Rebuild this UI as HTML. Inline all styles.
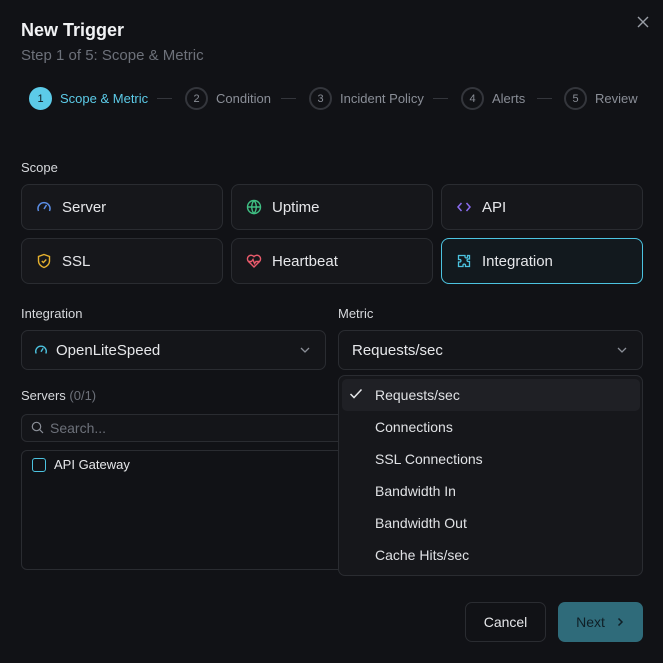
<!DOCTYPE html>
<html><head><style>
*{box-sizing:border-box;margin:0;padding:0}
body{width:663px;height:663px;background:#111216;font-family:"Liberation Sans",sans-serif;color:#e6e7ea;position:relative;overflow:hidden}
.a{position:absolute}
.card{position:absolute;width:202px;height:46px;border:1px solid #2a2c31;border-radius:8px;background:#16171b;font-size:15px;display:flex;align-items:center;padding-left:14px}
.card svg{margin-right:10px}
.lbl{position:absolute;font-size:13px;color:#d6d8dc}
.step{position:absolute;top:87px;display:flex;align-items:center;font-size:13px;color:#8a8e97}
.c{width:23px;height:23px;border-radius:50%;border:2px solid #34363c;display:flex;align-items:center;justify-content:center;font-size:11px;margin-right:8px;color:#8a8e97}
.dash{position:absolute;top:98px;height:1px;background:#34363c;width:15px}
.sel{position:absolute;height:40px;border:1px solid #2a2c31;border-radius:7px;background:#141519;font-size:15px;display:flex;align-items:center}
.it{position:absolute;left:375px;font-size:14px;color:#e0e2e5}
</style></head><body>
<div class="a" style="left:21px;top:20px;font-size:18px;font-weight:bold;color:#f1f2f4">New Trigger</div>
<div class="a" style="left:21px;top:47px;font-size:15px;color:#6d717a">Step 1 of 5: Scope &amp; Metric</div>
<svg class="a" style="left:637px;top:16px" width="12" height="12" viewBox="0 0 12 12"><path d="M1 1L11 11M11 1L1 11" stroke="#9a9ea6" stroke-width="1.4"/></svg>

<div class="step" style="left:29px;color:#5ccbe8"><div class="c" style="background:#5ccbe8;border-color:#5ccbe8;color:#0e1a20">1</div>Scope &amp; Metric</div>
<div class="dash" style="left:157px"></div>
<div class="step" style="left:185px"><div class="c">2</div>Condition</div>
<div class="dash" style="left:281px"></div>
<div class="step" style="left:309px"><div class="c">3</div>Incident Policy</div>
<div class="dash" style="left:433px"></div>
<div class="step" style="left:461px"><div class="c">4</div>Alerts</div>
<div class="dash" style="left:537px"></div>
<div class="step" style="left:564px"><div class="c">5</div>Review</div>

<div class="lbl" style="left:21px;top:160px">Scope</div>
<div class="card" style="left:21px;top:184px"><svg width="16" height="16" viewBox="0 0 16 16" fill="none" stroke="#5b8ee6" stroke-width="1.5"><path d="M2.5 12A6 6 0 1 1 13.5 12"/><path d="M8 10L10.5 6"/></svg>Server</div>
<div class="card" style="left:231px;top:184px"><svg width="16" height="16" viewBox="0 0 16 16" fill="none" stroke="#3fbf83" stroke-width="1.4"><circle cx="8" cy="8" r="6.5"/><path d="M1.5 8H14.5M8 1.5C5 5 5 11 8 14.5C11 11 11 5 8 1.5"/></svg>Uptime</div>
<div class="card" style="left:441px;top:184px"><svg width="16" height="16" viewBox="0 0 16 16" fill="none" stroke="#8b6cf0" stroke-width="1.5"><path d="M5.5 4L2 8L5.5 12M10.5 4L14 8L10.5 12"/></svg>API</div>
<div class="card" style="left:21px;top:238px"><svg width="16" height="16" viewBox="0 0 16 16" fill="none" stroke="#e6b12e" stroke-width="1.4"><path d="M8 1.5L13.5 3.5V8C13.5 11 11 13.5 8 14.5C5 13.5 2.5 11 2.5 8V3.5Z"/><path d="M5.8 8L7.4 9.5L10.3 6.5"/></svg>SSL</div>
<div class="card" style="left:231px;top:238px"><svg width="16" height="16" viewBox="0 0 16 16" fill="none" stroke="#e85a6b" stroke-width="1.4"><path d="M8 14L2.3 8.3A3.5 3.5 0 0 1 8 3.6A3.5 3.5 0 0 1 13.7 8.3Z"/><path d="M2 8.5H5.5L7 6.5L8.5 10.5L10 8.5H14"/></svg>Heartbeat</div>
<div class="card" style="left:441px;top:238px;border-color:#4cc3e0;background:#12191e"><svg width="16" height="16" viewBox="0 0 16 16" fill="none" stroke="#4cc3e0" stroke-width="1.3"><path d="M6 2.5H9V4A1.3 1.3 0 0 0 11.5 4V2.5H13.5V6H12A1.3 1.3 0 0 0 12 8.5H13.5V13.5H9.5V12A1.3 1.3 0 0 0 7 12V13.5H2.5V9H4A1.3 1.3 0 0 0 4 6.5H2.5V2.5Z"/></svg>Integration</div>

<div class="lbl" style="left:21px;top:306px">Integration</div>
<div class="lbl" style="left:338px;top:306px">Metric</div>
<div class="sel" style="left:21px;top:330px;width:305px;padding-left:12px"><svg width="14" height="14" viewBox="0 0 16 16" fill="none" stroke="#4cc3e0" stroke-width="1.6" style="margin-right:8px"><path d="M2.5 12A6 6 0 1 1 13.5 12"/><path d="M8 10L10.5 6"/></svg>OpenLiteSpeed<svg class="a" style="left:278px;top:15px" width="10" height="8" viewBox="0 0 10 8" fill="none" stroke="#8a8e97" stroke-width="1.3"><path d="M1 2L5 6L9 2"/></svg></div>
<div class="sel" style="left:338px;top:330px;width:305px;padding-left:13px">Requests/sec<svg class="a" style="left:278px;top:15px" width="10" height="8" viewBox="0 0 10 8" fill="none" stroke="#8a8e97" stroke-width="1.3"><path d="M1 2L5 6L9 2"/></svg></div>

<div class="lbl" style="left:21px;top:388px">Servers <span style="color:#6d717a">(0/1)</span></div>
<div class="a" style="left:21px;top:414px;width:330px;height:28px;border:1px solid #2a2c31;border-radius:6px;background:#141519"></div>
<svg class="a" style="left:31px;top:421px" width="13" height="13" viewBox="0 0 13 13" fill="none" stroke="#8a8e97" stroke-width="1.2"><circle cx="5.5" cy="5.5" r="4.2"/><path d="M8.6 8.6L12 12"/></svg>
<div class="a" style="left:50px;top:420px;font-size:14px;color:#6d717a">Search...</div>
<div class="a" style="left:21px;top:450px;width:330px;height:120px;border:1px solid #2a2c31;border-radius:6px;background:#111216"></div>
<div class="a" style="left:32px;top:458px;width:14px;height:14px;border:1.5px solid #4cc3e0;border-radius:3px"></div>
<div class="a" style="left:54px;top:457px;font-size:13px;color:#e6e7ea">API Gateway</div>

<div class="a" style="left:338px;top:375px;width:305px;height:201px;border:1px solid #2a2c31;border-radius:7px;background:#16171b"></div>
<div class="a" style="left:342px;top:379px;width:298px;height:32px;border-radius:5px;background:#1f2025"></div>
<svg class="a" style="left:349px;top:388px" width="14" height="12" viewBox="0 0 14 12" fill="none" stroke="#e6e7ea" stroke-width="1.5"><path d="M1.5 6L5 9.5L12.5 1.5"/></svg>
<div class="it" style="top:387px">Requests/sec</div>
<div class="it" style="top:419px">Connections</div>
<div class="it" style="top:451px">SSL Connections</div>
<div class="it" style="top:483px">Bandwidth In</div>
<div class="it" style="top:515px">Bandwidth Out</div>
<div class="it" style="top:547px">Cache Hits/sec</div>

<div class="a" style="left:465px;top:602px;width:81px;height:40px;border:1px solid #2a2c31;border-radius:7px;background:#111216;font-size:14px;display:flex;align-items:center;justify-content:center">Cancel</div>
<div class="a" style="left:558px;top:602px;width:85px;height:40px;border-radius:7px;background:#2f6b7a;font-size:14px;color:#0f1f26;display:flex;align-items:center;justify-content:center">Next<svg width="10" height="10" viewBox="0 0 10 10" fill="none" stroke="#0f1f26" stroke-width="1.5" style="margin-left:10px"><path d="M3.5 1.5L7 5L3.5 8.5"/></svg></div>
</body></html>
